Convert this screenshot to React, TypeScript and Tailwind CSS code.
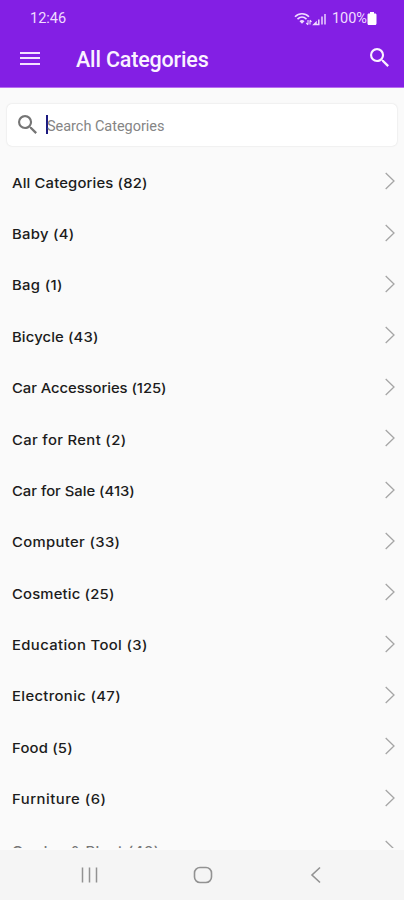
import React from 'react';

const categories = [
  { name: 'All Categories', count: 82, tracking: 'tracking-[0.13px]' },
  { name: 'Baby', count: 4, tracking: 'tracking-[0.26px]' },
  { name: 'Bag', count: 1, tracking: 'tracking-[0.3px]' },
  { name: 'Bicycle', count: 43, tracking: 'tracking-[0.11px]' },
  { name: 'Car Accessories', count: 125, tracking: 'tracking-[-0.07px]' },
  { name: 'Car for Rent', count: 2, tracking: 'tracking-[0.3px]' },
  { name: 'Car for Sale', count: 413, tracking: 'tracking-[-0.02px]' },
  { name: 'Computer', count: 33, tracking: 'tracking-[0.3px]' },
  { name: 'Cosmetic', count: 25, tracking: 'tracking-[0.15px]' },
  { name: 'Education Tool', count: 3, tracking: 'tracking-[0.33px]' },
  { name: 'Electronic', count: 47, tracking: 'tracking-[0.31px]' },
  { name: 'Food', count: 5, tracking: 'tracking-[0.15px]' },
  { name: 'Furniture', count: 6, tracking: 'tracking-[0.44px]' },
  { name: 'Garden & Plant', count: 46, tracking: 'tracking-[0.4px]' },
];

const SearchIcon = ({ className }: { className: string }) => (
  <svg viewBox="3 3 17.5 17.5" className={className} fill="currentColor">
    <path d="M15.5 14h-.79l-.28-.27A6.47 6.47 0 0 0 16 9.5 6.5 6.5 0 1 0 9.5 16c1.61 0 3.09-.59 4.23-1.57l.27.28v.79l5 4.99L20.49 19l-4.99-5zm-6 0C7.01 14 5 11.99 5 9.5S7.01 5 9.5 5 14 7.01 14 9.5 11.99 14 9.5 14z" />
  </svg>
);

const StatusBar = () => (
  <div className="flex h-9 items-center justify-between pl-[30px] pr-[27px] pt-px text-[14.5px] text-[#f0dcff]">
    <span>12:46</span>
    <div className="flex items-center">
      <svg viewBox="0 0 34 14" className="mr-1 h-3.5 w-[34px]" fill="none" stroke="currentColor">
        <path d="M1 4.8C5 .7 11 .7 15 4.800M3.500 7.200c2.800-2.700 6.200-2.700 9 0" strokeWidth="1.6" />
        <path d="M5.500 9.200c1.600-1.500 3.400-1.500 5 0L8 11.800z" fill="currentColor" stroke="none" />
        <path d="M14 8v4.500M12.300 11l1.700 1.800M16 12.500V8.300M16 8.200l1.500 1.700" strokeWidth="1.1" />
        <path d="M20 12.500h2v-2zM22 12.500h2.800V7.500" strokeWidth="1.500" />
        <path d="M28 12.500V4.500M31 12.500V2" strokeWidth="1.900" opacity=".75" />
      </svg>
      <span className="text-[14.5px]">100%</span>
      <svg viewBox="0 0 10 13" className="h-[13px] w-2.5" fill="white">
        <path d="M3 0h4v1.500h1.200c.7 0 1.300.6 1.300 1.300v8.700c0 .8-.6 1.500-1.300 1.500H1.800C1 13 .5 12.300.5 11.500V2.800c0-.7.6-1.300 1.300-1.300H3z" />
      </svg>
    </div>
  </div>
);

const Header = () => (
  <header className="h-[88px] shrink-0 border-b border-[#b86df0] bg-[#831fe4] font-[Roboto,sans-serif]">
    <StatusBar />
    <div className="flex h-[46px] items-center pl-5 pr-[15px]">
      <div className="flex w-5 flex-col gap-[3.5px] pb-0.5">
        <span className="h-[2px] bg-[#f3e2ff]" />
        <span className="h-[2px] bg-[#f3e2ff]" />
        <span className="h-[2px] bg-[#f3e2ff]" />
      </div>
      <h1 className="ml-9 flex-1 pt-0.5 text-[21.5px] font-medium tracking-[-0.17px] text-[#faf2ff]">All Categories</h1>
      <SearchIcon className="mb-1 size-[19px] text-[#faf2ff]" />
    </div>
  </header>
);

const SearchBox = () => (
  <div className="mx-[7px] mt-4 flex h-[42px] shrink-0 items-center rounded-[5px] bg-white pl-[11px] shadow-[0_0_2px_rgba(0,0,0,0.14)]">
    <SearchIcon className="mb-0.5 size-[19px] text-[#757575]" />
    <span className="mb-0.5 ml-[9px] h-[19px] w-[2px] bg-[#1c1a80]" />
    <span className="-ml-px pt-[3px] font-[Roboto,sans-serif] text-[14.5px] tracking-[-0.03px] text-[#858585]">Search Categories</span>
  </div>
);

const NavigationBar = () => (
  <nav className="flex h-[50px] shrink-0 items-center bg-[#f5f5f5] pl-20 text-[#929292]">
    <svg viewBox="0 0 18 18" className="size-[18px]" fill="none" stroke="currentColor" strokeWidth="1.5">
      <path d="M2.500 1.500v15M9.500 1.500v15M16.500 1.500v15" />
    </svg>
    <svg viewBox="0 0 20 18" className="ml-[95px] h-[18px] w-5" fill="none" stroke="currentColor" strokeWidth="1.6">
      <rect x="1.500" y="1.500" width="17" height="15" rx="5.500" />
    </svg>
    <svg viewBox="0 0 12 18" className="ml-[97px] h-[18px] w-3" fill="none" stroke="currentColor" strokeWidth="1.6">
      <path d="M10 1.500 2 9l8 7.500" />
    </svg>
  </nav>
);

const App = () => {
  return (
    <div className="flex h-[900px] w-[404px] flex-col overflow-hidden bg-[#fafafa]">
      <Header />
      <SearchBox />
      {/* The last row is clipped just above the navigation bar */}
      <div className="mb-[2px] mt-[11px] min-h-0 flex-1 overflow-hidden">
        {categories.map(category => (
          <div key={category.name} className="group flex h-[51.4px] items-center justify-between pl-3 pr-[9px]">
            <span className={`origin-left scale-x-110 whitespace-nowrap font-[Inter,sans-serif] text-[13.5px] font-medium text-[#1c1c1c] group-last:text-[#777777] ${category.tracking}`}>
              {category.name} ({category.count})
            </span>
            <svg viewBox="0 0 10 18" className="mb-[3px] h-[18px] w-2.5" fill="none" stroke="#a6a6a6" strokeWidth="1.3">
              <path d="m.7 1 8.300 8-8.300 8" />
            </svg>
          </div>
        ))}
      </div>
      <NavigationBar />
    </div>
  );
};

export default App;
